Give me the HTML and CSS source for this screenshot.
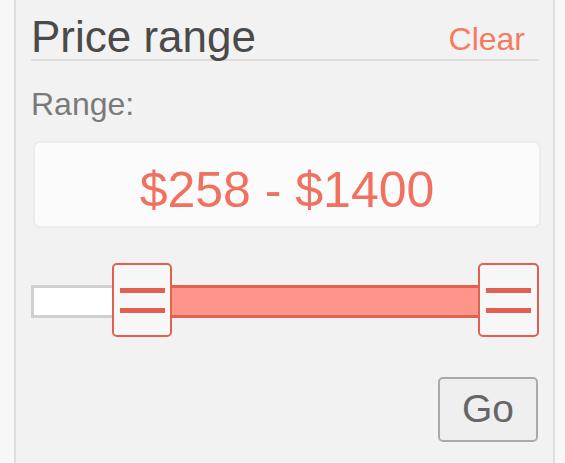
FILE: index.html
```html
<!DOCTYPE html>
<html>
<head>
<meta charset="utf-8">
<link rel="stylesheet" href="styles.css">
</head>
<body>
<div class="panel">
  <div class="header">
    <h2 class="title">Price range</h2>
    <a class="clear">Clear</a>
  </div>
  <div class="label">Range:</div>
  <div class="price-box">$258 - $1400</div>
  <div class="slider">
    <div class="track">
      <div class="range"></div>
    </div>
    <div class="handle handle-min"><span class="grip"></span><span class="grip"></span></div>
    <div class="handle handle-max"><span class="grip"></span><span class="grip"></span></div>
  </div>
  <div class="actions">
    <button class="go">Go</button>
  </div>
</div>
</body>
</html>
```
FILE: styles.css
```css
html, body {
  margin: 0;
  padding: 0;
  background: #f7f7f7;
  font-family: "Liberation Sans", Arial, Helvetica, sans-serif;
}

.panel {
  margin-left: 14px;
  width: 541px;
  min-height: 463px;
  box-sizing: border-box;
  background: #f2f2f2;
  border-left: 2px solid #dedede;
  border-right: 2px solid #dedede;
  padding: 0 14px 0 15px;
}

.header {
  display: flex;
  justify-content: space-between;
  align-items: baseline;
  padding-top: 15px;
  border-bottom: 2px solid #dcdcdc;
}

.title {
  margin: 0;
  font-size: 44px;
  line-height: 44px;
  font-weight: normal;
  color: #4a4a4a;
}

.clear {
  font-size: 32px;
  line-height: 32px;
  color: #f67b5c;
  margin-right: 14px;
  cursor: pointer;
  position: relative;
  top: -2px;
}

.label {
  margin-top: 27px;
  font-size: 32px;
  line-height: 32px;
  color: #7a7a7a;
}

.price-box {
  margin: 21px -2px 0 2px;
  height: 87px;
  box-sizing: border-box;
  border: 2px solid #ececec;
  border-radius: 7px;
  background: #fbfbfb;
  padding-top: 19px;
  text-align: center;
  font-size: 50px;
  line-height: 56px;
  color: #f0715f;
}

.slider {
  position: relative;
  margin-top: 35px;
  height: 74px;
  display: flex;
  align-items: center;
}

.track {
  position: relative;
  flex: 1;
  height: 33px;
  margin-top: 3px;
  box-sizing: border-box;
  border: 3px solid #d0d0d0;
  background: #ffffff;
}

.range {
  position: absolute;
  left: 136px;
  width: 310px;
  top: -3px;
  bottom: -3px;
  box-sizing: border-box;
  background: #fe958a;
  border-style: solid;
  border-color: #e2604f;
  border-width: 3px 0;
}

.handle {
  position: absolute;
  top: 0;
  height: 74px;
  box-sizing: border-box;
  border: 2px solid #e2604f;
  border-radius: 5px;
  background: #f7f7f7;
  display: flex;
  flex-direction: column;
  align-items: center;
  justify-content: center;
  gap: 15px;
}

.handle-min {
  left: 81px;
  width: 60px;
}

.handle-max {
  left: 447px;
  width: 61px;
}

.grip {
  display: block;
  width: 45px;
  height: 5px;
  background: #e2604f;
}

.actions {
  display: flex;
  justify-content: flex-end;
  margin-top: 40px;
  padding-right: 1px;
}

.go {
  width: 100px;
  height: 65px;
  box-sizing: border-box;
  border: 2px solid #aaaaaa;
  border-radius: 5px;
  background: #efefef;
  color: #666666;
  font-family: "Liberation Sans", Arial, Helvetica, sans-serif;
  font-size: 39px;
  line-height: 1;
  padding: 0 0 2px 0;
}
```
